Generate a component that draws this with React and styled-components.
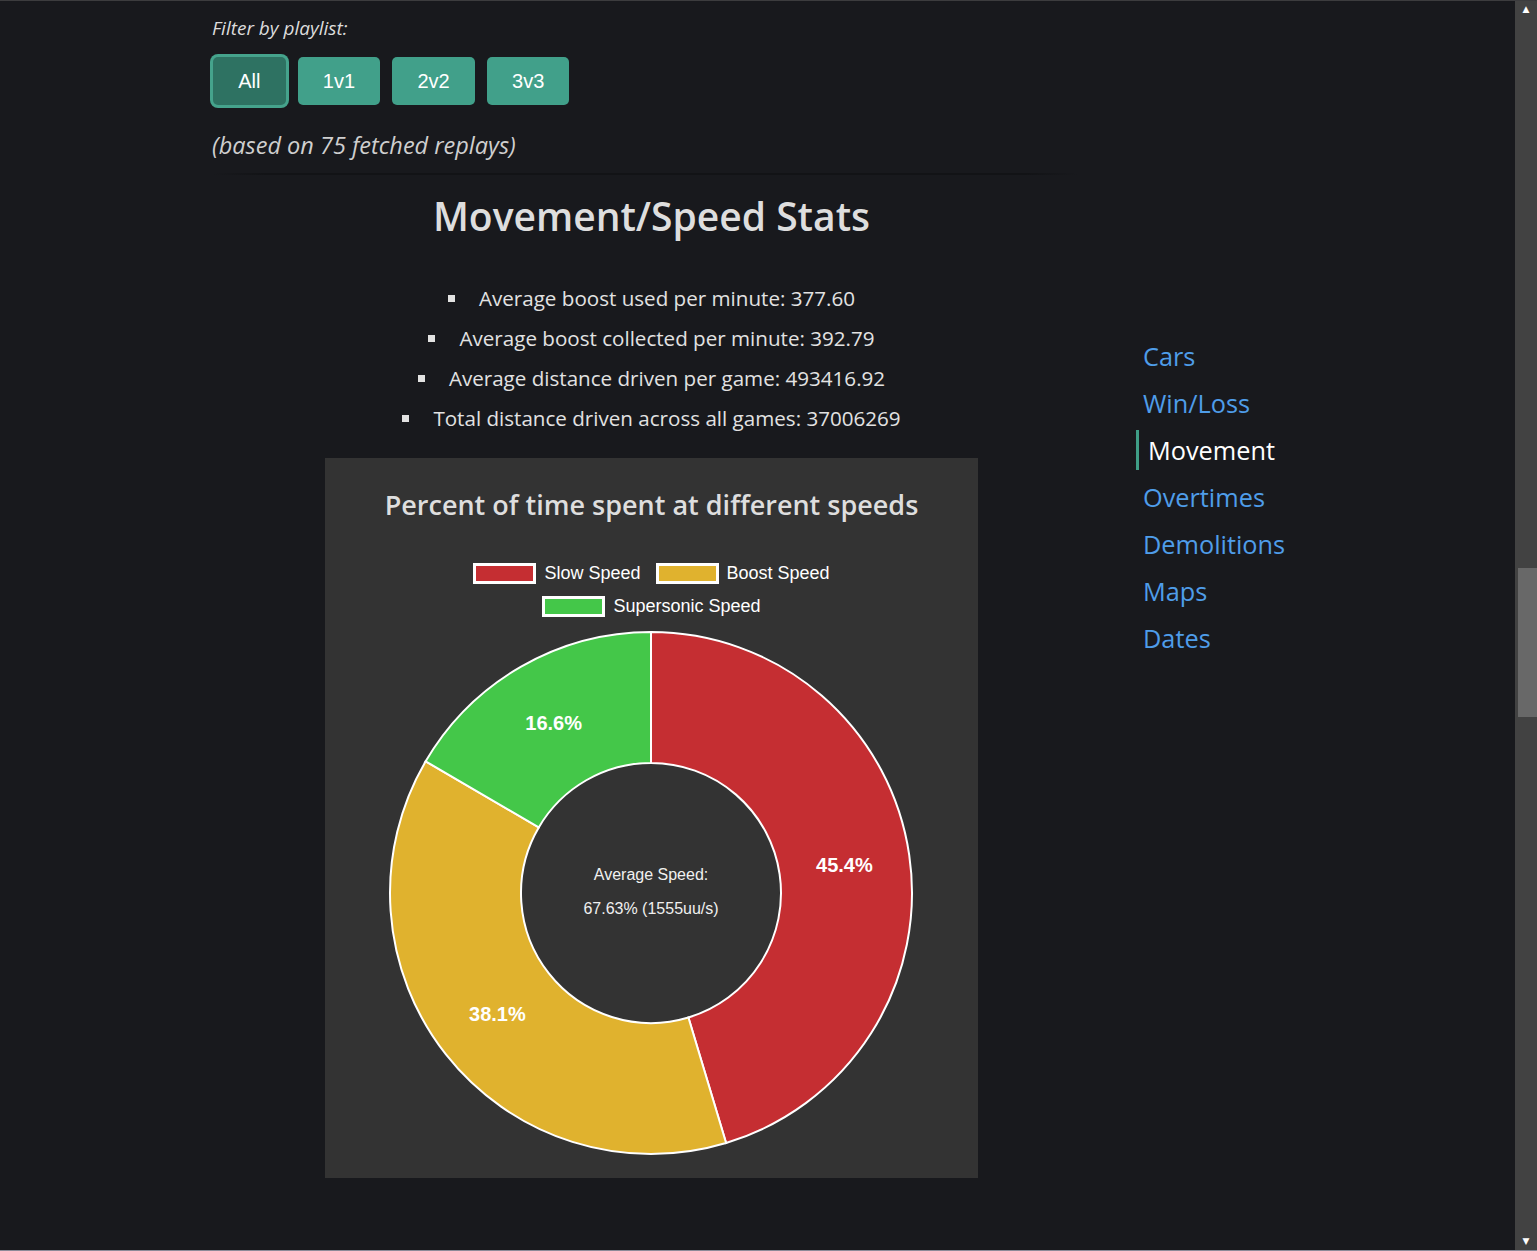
import React from "react";
import styled, { createGlobalStyle } from "styled-components";

const GlobalStyle = createGlobalStyle`
  html, body {
    margin: 0;
    padding: 0;
    background: #18191d;
    overflow: hidden;
  }
  body {
    font-family: "Open Sans", "Noto Sans", sans-serif;
  }
`;

const playlists = ["All", "1v1", "2v2", "3v3"];

const stats = [
  "Average boost used per minute: 377.60",
  "Average boost collected per minute: 392.79",
  "Average distance driven per game: 493416.92",
  "Total distance driven across all games: 37006269",
];

const navLinks = ["Cars", "Win/Loss", "Movement", "Overtimes", "Demolitions", "Maps", "Dates"];

// slices of the speed donut, clockwise from the top
const speeds = [
  { label: "Slow Speed", value: 45.4, color: "#c52e32" },
  { label: "Boost Speed", value: 38.1, color: "#e0b22e" },
  { label: "Supersonic Speed", value: 16.6, color: "#44c749" },
];

function polar(cx, cy, r, deg) {
  const a = (deg * Math.PI) / 180;
  return [cx + r * Math.cos(a), cy + r * Math.sin(a)];
}

function slicePath(cx, cy, r0, r1, a0, a1) {
  const large = a1 - a0 > 180 ? 1 : 0;
  const [x1, y1] = polar(cx, cy, r1, a0);
  const [x2, y2] = polar(cx, cy, r1, a1);
  const [x3, y3] = polar(cx, cy, r0, a1);
  const [x4, y4] = polar(cx, cy, r0, a0);
  return `M${x1} ${y1} A${r1} ${r1} 0 ${large} 1 ${x2} ${y2} L${x3} ${y3} A${r0} ${r0} 0 ${large} 0 ${x4} ${y4} Z`;
}

function SpeedDonut() {
  const cx = 326;
  const cy = 270;
  const outer = 261;
  const inner = 130;
  const total = speeds.reduce((s, d) => s + d.value, 0);
  let start = -90;
  const slices = speeds.map((d) => {
    const sweep = (d.value / total) * 360;
    const s = { ...d, a0: start, a1: start + sweep };
    start += sweep;
    return s;
  });
  return (
    <DonutSvg width="653" height="535" viewBox="0 0 653 535">
      {slices.map((s) => (
        <path
          key={s.label}
          d={slicePath(cx, cy, inner, outer, s.a0, s.a1)}
          fill={s.color}
          stroke="#fff"
          strokeWidth="2"
        />
      ))}
      {slices.map((s) => {
        const [x, y] = polar(cx, cy, (inner + outer) / 2, (s.a0 + s.a1) / 2);
        return (
          <SliceLabel key={s.label} x={x} y={y + 7} textAnchor="middle">
            {s.value.toFixed(1)}%
          </SliceLabel>
        );
      })}
      <CenterText x={cx} y={cy - 13} textAnchor="middle">
        Average Speed:
      </CenterText>
      <CenterText x={cx} y={cy + 21} textAnchor="middle">
        67.63% (1555uu/s)
      </CenterText>
    </DonutSvg>
  );
}

export default function App() {
  return (
    <Page>
      <GlobalStyle />
      <Content>
        <Main>
          <FilterLabel>Filter by playlist:</FilterLabel>
          <ButtonRow>
            {playlists.map((p) => (
              <PlaylistButton key={p} active={p === "All"}>
                {p}
              </PlaylistButton>
            ))}
          </ButtonRow>
          <ReplayNote>(based on 75 fetched replays)</ReplayNote>
          <Divider />
          <Heading>Movement/Speed Stats</Heading>
          <StatList>
            {stats.map((s) => (
              <StatItem key={s}>{s}</StatItem>
            ))}
          </StatList>
          <ChartPanel>
            <ChartTitle>Percent of time spent at different speeds</ChartTitle>
            <Legend>
              {speeds.map((d) => (
                <LegendItem key={d.label}>
                  <LegendBox color={d.color} />
                  {d.label}
                </LegendItem>
              ))}
            </Legend>
            <SpeedDonut />
          </ChartPanel>
        </Main>
        <Nav>
          {navLinks.map((n) => (
            <NavLink key={n} active={n === "Movement"}>
              {n}
            </NavLink>
          ))}
        </Nav>
      </Content>
      <Scrollbar>
        <ScrollArrow>▲</ScrollArrow>
        <ScrollTrack>
          <ScrollThumb />
        </ScrollTrack>
        <ScrollArrow>▼</ScrollArrow>
      </Scrollbar>
    </Page>
  );
}

const Page = styled.div`
  display: flex;
  height: 1251px;
  box-sizing: border-box;
  border-top: 1px solid #3c3c3e;
  border-bottom: 1px solid #8c8a98;
  background: #18191d;
`;

const Content = styled.div`
  flex: 1;
  display: flex;
  min-width: 0;
`;

const Main = styled.div`
  width: 883px;
  margin-left: 210px;
  padding-top: 15px;
  display: flex;
  flex-direction: column;
`;

const FilterLabel = styled.div`
  font-style: italic;
  font-size: 19px;
  line-height: 24px;
  color: #dcdcdc;
  padding-left: 2px;
`;

const ButtonRow = styled.div`
  display: flex;
  gap: 12px;
  margin-top: 17px;
  padding-left: 3px;
`;

const PlaylistButton = styled.button`
  height: 48px;
  padding: 0 25.2px;
  border: none;
  border-radius: 5px;
  font-family: "Liberation Sans", Arial, sans-serif;
  font-size: 20px;
  color: #fff;
  background: ${(p) => (p.active ? "#2e7262" : "#41a08a")};
  box-shadow: ${(p) => (p.active ? "0 0 0 3px #45a38c" : "none")};
  cursor: pointer;
`;

const ReplayNote = styled.div`
  margin-top: 25px;
  font-style: italic;
  font-size: 23.5px;
  line-height: 30px;
  color: #cfcfcf;
  padding-left: 2px;
`;

const Divider = styled.div`
  margin: 13px 15px 0 3px;
  height: 2px;
  background: linear-gradient(90deg, #18191d, #121316 6%, #121316 94%, #18191d);
`;

const Heading = styled.h2`
  margin: 17px 0 0;
  text-align: center;
  font-size: 39px;
  font-weight: 600;
  line-height: 48px;
  color: #dedede;
`;

const StatList = styled.ul`
  list-style: none;
  margin: 38px 0 0;
  padding: 0;
  text-align: center;
`;

const StatItem = styled.li`
  font-size: 20.6px;
  line-height: 40px;
  color: #e2e2e2;
  &::before {
    content: "";
    display: inline-block;
    width: 7px;
    height: 7px;
    background: #e2e2e2;
    margin-right: 24px;
    vertical-align: 4px;
  }
`;

const ChartPanel = styled.div`
  align-self: center;
  width: 653px;
  margin-top: 20px;
  padding: 25px 0 20px;
  background: #333333;
  display: flex;
  flex-direction: column;
  align-items: center;
`;

const ChartTitle = styled.div`
  font-size: 27px;
  font-weight: 600;
  line-height: 44px;
  color: #dedede;
`;

const Legend = styled.div`
  margin-top: 30px;
  max-width: 380px;
  display: flex;
  flex-wrap: wrap;
  justify-content: center;
  column-gap: 15px;
`;

const LegendItem = styled.div`
  display: flex;
  align-items: center;
  gap: 8px;
  height: 33px;
  font-family: "Liberation Sans", Arial, sans-serif;
  font-size: 18px;
  color: #fff;
`;

const LegendBox = styled.span`
  width: 63px;
  height: 21px;
  box-sizing: border-box;
  border: 3px solid #fff;
  background: ${(p) => p.color};
`;

const DonutSvg = styled.svg`
  display: block;
`;

const SliceLabel = styled.text`
  font-family: "Liberation Sans", Arial, sans-serif;
  font-size: 20px;
  font-weight: 700;
  fill: #fff;
`;

const CenterText = styled.text`
  font-family: "Liberation Sans", Arial, sans-serif;
  font-size: 16px;
  fill: #f0f0f0;
`;

const Nav = styled.nav`
  margin-left: 43px;
  padding-top: 335px;
  display: flex;
  flex-direction: column;
  gap: 7px;
`;

const NavLink = styled.a`
  display: block;
  height: 40px;
  line-height: 40px;
  font-size: 25.3px;
  color: ${(p) => (p.active ? "#ffffff" : "#4f9de9")};
  border-left: ${(p) => (p.active ? "3px solid #3f9e87" : "none")};
  padding-left: ${(p) => (p.active ? "9px" : "7px")};
  cursor: pointer;
`;

const Scrollbar = styled.div`
  width: 22px;
  flex-shrink: 0;
  background: #424242;
  display: flex;
  flex-direction: column;
  align-items: center;
`;

const ScrollArrow = styled.div`
  height: 17px;
  line-height: 17px;
  font-size: 9px;
  color: #fff;
  font-family: "DejaVu Sans", sans-serif;
`;

const ScrollTrack = styled.div`
  flex: 1;
  width: 100%;
  display: flex;
  flex-direction: column;
  align-items: flex-end;
`;

const ScrollThumb = styled.div`
  margin-top: 550px;
  width: 19px;
  height: 149px;
  background: #686868;
`;
